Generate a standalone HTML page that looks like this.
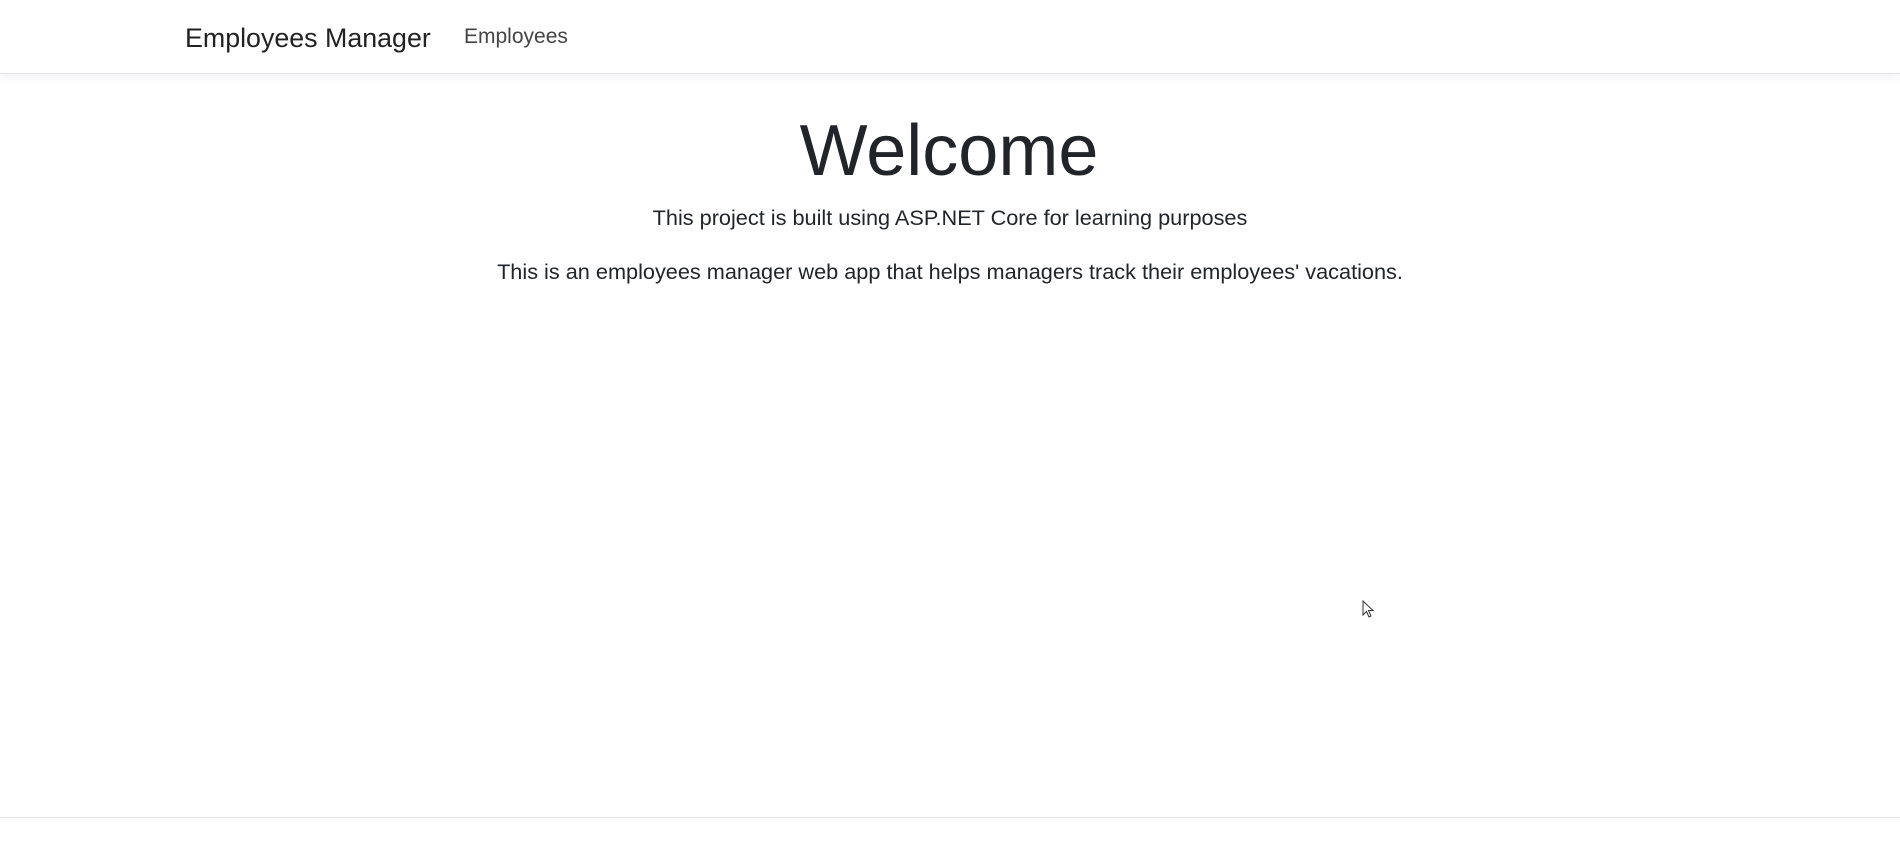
<!DOCTYPE html>
<html><head><style>
body{margin:0;width:1900px;height:848px;background:#fff;font-family:"Liberation Sans",sans-serif;color:#212529;position:relative;overflow:hidden}
.nav{position:absolute;top:0;left:0;right:0;height:73px;border-bottom:1px solid #dee2e6;box-shadow:0 4px 10px rgba(0,0,0,.05);background:#fff}
.brand{position:absolute;left:185px;top:23px;font-size:26.8px;color:#222}
.link{position:absolute;left:464px;top:25px;font-size:21px;color:#444}
.c{position:absolute;left:0;right:0;text-align:center;white-space:nowrap}
.foot{position:absolute;left:0;right:0;top:817px;border-top:1px solid #dee2e6}
</style></head><body>
<div class="nav"><div class="brand">Employees Manager</div><div class="link">Employees</div></div>
<div class="c" style="top:110px;font-size:72px;font-weight:300;left:-2px">Welcome</div>
<div class="c" style="top:205px;font-size:21.7px">This project is built using ASP.NET Core for learning purposes</div>
<div class="c" style="top:259px;font-size:21.7px">This is an employees manager web app that helps managers track their employees' vacations.</div>
<svg style="position:absolute;left:1362px;top:600px" width="14" height="20" viewBox="0 0 14 20"><path d="M1 1 L1 15 L4.5 11.5 L7 17 L9 16 L6.5 10.5 L11 10.5 Z" fill="#fff" stroke="#333" stroke-width="1"/></svg>
<div class="foot"></div>
</body></html>
